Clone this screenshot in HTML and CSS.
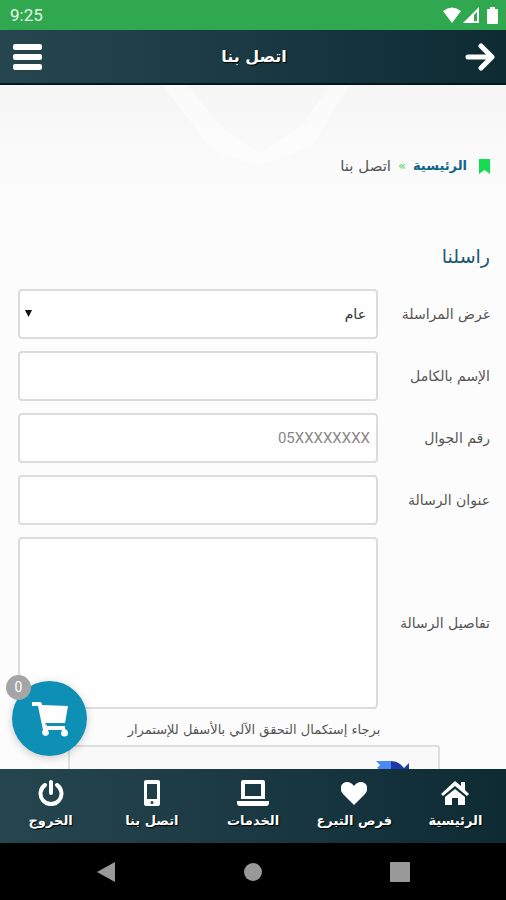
FILE: index.html
```html
<!DOCTYPE html>
<html lang="ar" dir="rtl">
<head>
    <meta charset="UTF-8">
    <meta name="viewport" content="width=device-width, initial-scale=1.0">
    <title>اتصل بنا</title>
    <link rel="stylesheet" href="styles.css">
</head>
<body>
    <!-- Phone status bar -->
    <div class="status-bar" dir="ltr">
        <span class="clock">9:25</span>
        <div class="status-icons">
            <svg width="18" height="16" viewBox="0 0 18 16"><path d="M9 16 0 4Q9-3 18 4z"/></svg>
            <svg width="16" height="16" viewBox="0 0 16 16"><path fill-rule="evenodd" d="M16 0v16H0zM11 8v6h3V5z"/></svg>
            <svg class="battery" width="11" height="17" viewBox="0 0 11 17"><path d="M3 0h5v2h2q1 0 1 1v13q0 1-1 1H1q-1 0-1-1V3q0-1 1-1h2z"/></svg>
        </div>
    </div>

    <header class="top-bar">
        <button type="button" class="icon-button" aria-label="رجوع">
            <svg width="30" height="30" viewBox="0 0 30 30" class="stroke-icon"><path d="M3 15h23M16 4l11 11-11 11"/></svg>
        </button>
        <h1>اتصل بنا</h1>
        <button type="button" class="icon-button" aria-label="القائمة">
            <svg width="30" height="28" viewBox="0 0 30 28"><rect x="0" y="1" width="29" height="6" rx="2"/><rect x="0" y="11" width="29" height="6" rx="2"/><rect x="0" y="21" width="29" height="6" rx="2"/></svg>
        </button>
    </header>

    <main class="page">
        <svg class="watermark" viewBox="0 0 240 95" aria-hidden="true"><path d="M25 0 75 65 120 80 173 60 210 0H190L165 38 120 68 80 38 50 0z"/></svg>

        <nav class="breadcrumb">
            <svg width="11" height="15" viewBox="0 0 11 15"><path d="M0 0h11v15l-5.500-4L0 15z"/></svg>
            <a href="#">الرئيسية</a>
            <span class="separator">»</span>
            <span class="current">اتصل بنا</span>
        </nav>

        <h2>راسلنا</h2>

        <form class="contact-form">
            <div class="row">
                <label for="purpose">غرض المراسلة</label>
                <div class="select-box">
                    <select id="purpose"><option>عام</option></select>
                    <svg class="caret" width="7" height="7" viewBox="0 0 7 7"><path d="M0 0h7L3.500 7z"/></svg>
                </div>
            </div>
            <div class="row">
                <label for="name">الإسم بالكامل</label>
                <input type="text" id="name">
            </div>
            <div class="row">
                <label for="mobile">رقم الجوال</label>
                <input type="tel" id="mobile" placeholder="05XXXXXXXX">
            </div>
            <div class="row">
                <label for="subject">عنوان الرسالة</label>
                <input type="text" id="subject">
            </div>
            <div class="row">
                <label for="details">تفاصيل الرسالة</label>
                <textarea id="details"></textarea>
            </div>
            <p class="captcha-note">برجاء إستكمال التحقق الآلي بالأسفل للإستمرار</p>
            <div class="captcha">
                <svg width="34" height="34" viewBox="0 0 34 34"><path fill="#4a8af4" d="M0 1h15v12H9L1 8l3-3z"/><path fill="#1c3aa9" d="M15 1q8 0 13 7l5-5v15H18l5-5q-3-4-8-4z"/></svg>
            </div>
        </form>

        <button type="button" class="cart" aria-label="السلة">
            <svg width="38" height="36" viewBox="0 0 38 36"><path d="M1 1h8q2 0 2 3l26 1-3 17H15l1 3h18v3q3 1 3 4a3.500 3.500 0 0 1-7 0l1-3H17l1 3a3.500 3.500 0 1 1-6-3L7 5H1z"/><path d="M14 23h20" class="cart-line"/></svg>
            <span class="badge">0</span>
        </button>
    </main>

    <nav class="tab-bar">
        <a href="#">
            <svg width="28" height="26" viewBox="0 0 28 26"><path d="m14 1 6 5V2h4v8l4 4-2 2-12-10L2 16l-2-2z"/><path d="m14 9 10 8v8h-7v-7h-6v7H4v-8z"/></svg>
            <span>الرئيسية</span>
        </a>
        <a href="#">
            <svg width="26" height="26" viewBox="0 0 26 26"><path d="M13 25 2 14C-3 8 1 2 6 2q4 0 7 4 3-4 7-4c5 0 9 6 4 12z"/></svg>
            <span>فرص التبرع</span>
        </a>
        <a href="#">
            <svg width="32" height="26" viewBox="0 0 32 26"><path fill-rule="evenodd" d="M6 0h20q2 0 2 2v17H4V2q0-2 2-2zm2 4v12h16V4z"/><path d="M0 21h32v2q0 3-3 3H3q-3 0-3-3z"/></svg>
            <span>الخدمات</span>
        </a>
        <a href="#">
            <svg width="18" height="26" viewBox="0 0 18 26"><path fill-rule="evenodd" d="M3 0h12q2 0 2 2v22q0 2-2 2H3q-2 0-2-2V2q0-2 2-2zm1 4v15h10V4zm5 17a1.500 1.500 0 1 0 0 3 1.500 1.500 0 0 0 0-3z"/></svg>
            <span>اتصل بنا</span>
        </a>
        <a href="#">
            <svg width="26" height="26" viewBox="0 0 26 26" class="stroke-icon"><path d="M7 5a10.500 10.500 0 1 0 12 0M13 2v11"/></svg>
            <span>الخروج</span>
        </a>
    </nav>

    <!-- Android navigation keys -->
    <div class="system-bar" dir="ltr">
        <svg width="20" height="22" viewBox="0 0 20 22"><path d="M19 1v20L1 11z"/></svg>
        <svg width="20" height="20" viewBox="0 0 20 20"><circle cx="10" cy="10" r="9"/></svg>
        <svg width="20" height="20" viewBox="0 0 20 20"><rect width="20" height="20" rx="1"/></svg>
    </div>
</body>
</html>
```
FILE: styles.css
```css
* {
    box-sizing: border-box;
}

body {
    display: flex;
    flex-direction: column;
    height: 100vh;
    margin: 0;
    font-family: "DejaVu Sans", sans-serif;
    font-size: 14px;
    color: #555;
    background-color: #fcfcfc;
}

svg {
    display: block;
    flex: none;
    fill: #fff;
}

.stroke-icon {
    fill: none;
    stroke: #fff;
    stroke-width: 5;
    stroke-linecap: round;
    stroke-linejoin: round;
}

.status-bar {
    display: flex;
    justify-content: space-between;
    align-items: center;
    height: 30px;
    padding: 0 8px 0 10px;
    background-color: #30a850;
}

.clock {
    font-family: Roboto, sans-serif;
    font-size: 17px;
    color: #e4f8e6;
}

.status-icons {
    display: flex;
    align-items: center;
    gap: 2px;
}

.battery {
    margin-left: 6px;
}

.top-bar,
.tab-bar {
    background: linear-gradient(to right, #26464f, #0e2b34);
}

.top-bar {
    display: flex;
    justify-content: space-between;
    align-items: center;
    height: 55px;
    padding: 0 11px 0 13px;
    border-bottom: 2px solid #06171c;
}

.top-bar h1 {
    margin: 0;
    font-size: 16px;
    color: #fff;
    text-shadow: 1px 1px 1px #000;
}

.icon-button {
    padding: 0;
    border: none;
    background: none;
    cursor: pointer;
}

/* Page content */
.page {
    position: relative;
    display: flex;
    flex-direction: column;
    flex: 1;
    min-height: 0;
    padding: 0 16px 0 18px;
    background: linear-gradient(#f6f6f6, #fcfcfc 110px);
}

.contact-form {
    flex: 1;
    min-height: 0;
    overflow: hidden;
}

.watermark {
    position: absolute;
    top: 0;
    left: 27%;
    width: 48%;
    opacity: 0.5;
}

.breadcrumb {
    position: relative;
    display: flex;
    align-items: center;
    gap: 7px;
    padding-top: 71px;
    font-size: 13px;
    line-height: 20px;
}

.breadcrumb svg {
    margin-left: 5px;
    fill: #14dc50;
}

.breadcrumb a {
    font-weight: bold;
    color: #0f6688;
    text-decoration: none;
}

.separator {
    color: #3ddc64;
}

.current {
    font-size: 15px;
}

.page h2 {
    margin: 65px 0 18px;
    font-size: 19px;
    font-weight: normal;
    line-height: 30px;
    color: #1b5670;
}

.row {
    display: grid;
    grid-template-columns: 112px 1fr;
    align-items: center;
    margin-bottom: 12px;
}

.row input,
.row select,
.row textarea {
    display: block;
    width: 100%;
    height: 50px;
    padding: 0 6px;
    border: 2px solid #dcdcdc;
    border-radius: 4px;
    background-color: #fefefe;
    font-family: Roboto, "DejaVu Sans", sans-serif;
    font-size: 15px;
    color: #333;
    text-align: right;
}

.row select {
    padding: 0 10px;
    font-size: 14px;
    appearance: none;
}

.row textarea {
    height: 172px;
    resize: none;
}

.row input::placeholder {
    color: #888;
}

.select-box {
    position: relative;
}

.caret {
    position: absolute;
    top: 21px;
    left: 7px;
    fill: #111;
}

.captcha-note {
    margin: 0;
    font-size: 13px;
    line-height: 18px;
    text-align: center;
}

.captcha {
    width: 79%;
    height: 100px;
    margin: 6px auto 0;
    padding: 13px 28px;
    border: 2px solid #dedede;
    border-radius: 3px;
    background-color: #f9f9f9;
}

/* Floating cart */
.cart {
    position: absolute;
    bottom: 13px;
    left: 12px;
    display: flex;
    justify-content: center;
    align-items: center;
    width: 75px;
    height: 75px;
    padding: 0;
    border: none;
    border-radius: 50%;
    background-color: #0e8fb5;
    box-shadow: 0 2px 8px rgba(0, 0, 0, 0.2);
    cursor: pointer;
}

.cart-line {
    stroke: #0e8fb5;
    stroke-width: 1;
}

.badge {
    position: absolute;
    top: -6px;
    left: -6px;
    width: 25px;
    height: 25px;
    border-radius: 50%;
    background-color: #a5a5a5;
    font-family: Roboto, sans-serif;
    font-size: 14px;
    line-height: 25px;
    color: #fff;
}

/* Bottom tabs */
.tab-bar {
    position: relative;
    display: grid;
    grid-template-columns: repeat(5, 1fr);
    height: 74px;
    padding-top: 11px;
}

.tab-bar a {
    display: flex;
    flex-direction: column;
    align-items: center;
    gap: 5px;
    font-size: 13px;
    font-weight: bold;
    line-height: 20px;
    color: #fff;
    text-decoration: none;
    text-shadow: 1px 1px 1px #000;
    white-space: nowrap;
}

.tab-bar .stroke-icon {
    stroke-width: 4;
}

.system-bar {
    display: flex;
    justify-content: space-between;
    align-items: center;
    height: 57px;
    padding: 0 19%;
    background-color: #000;
}

.system-bar svg {
    fill: #999;
}
```
